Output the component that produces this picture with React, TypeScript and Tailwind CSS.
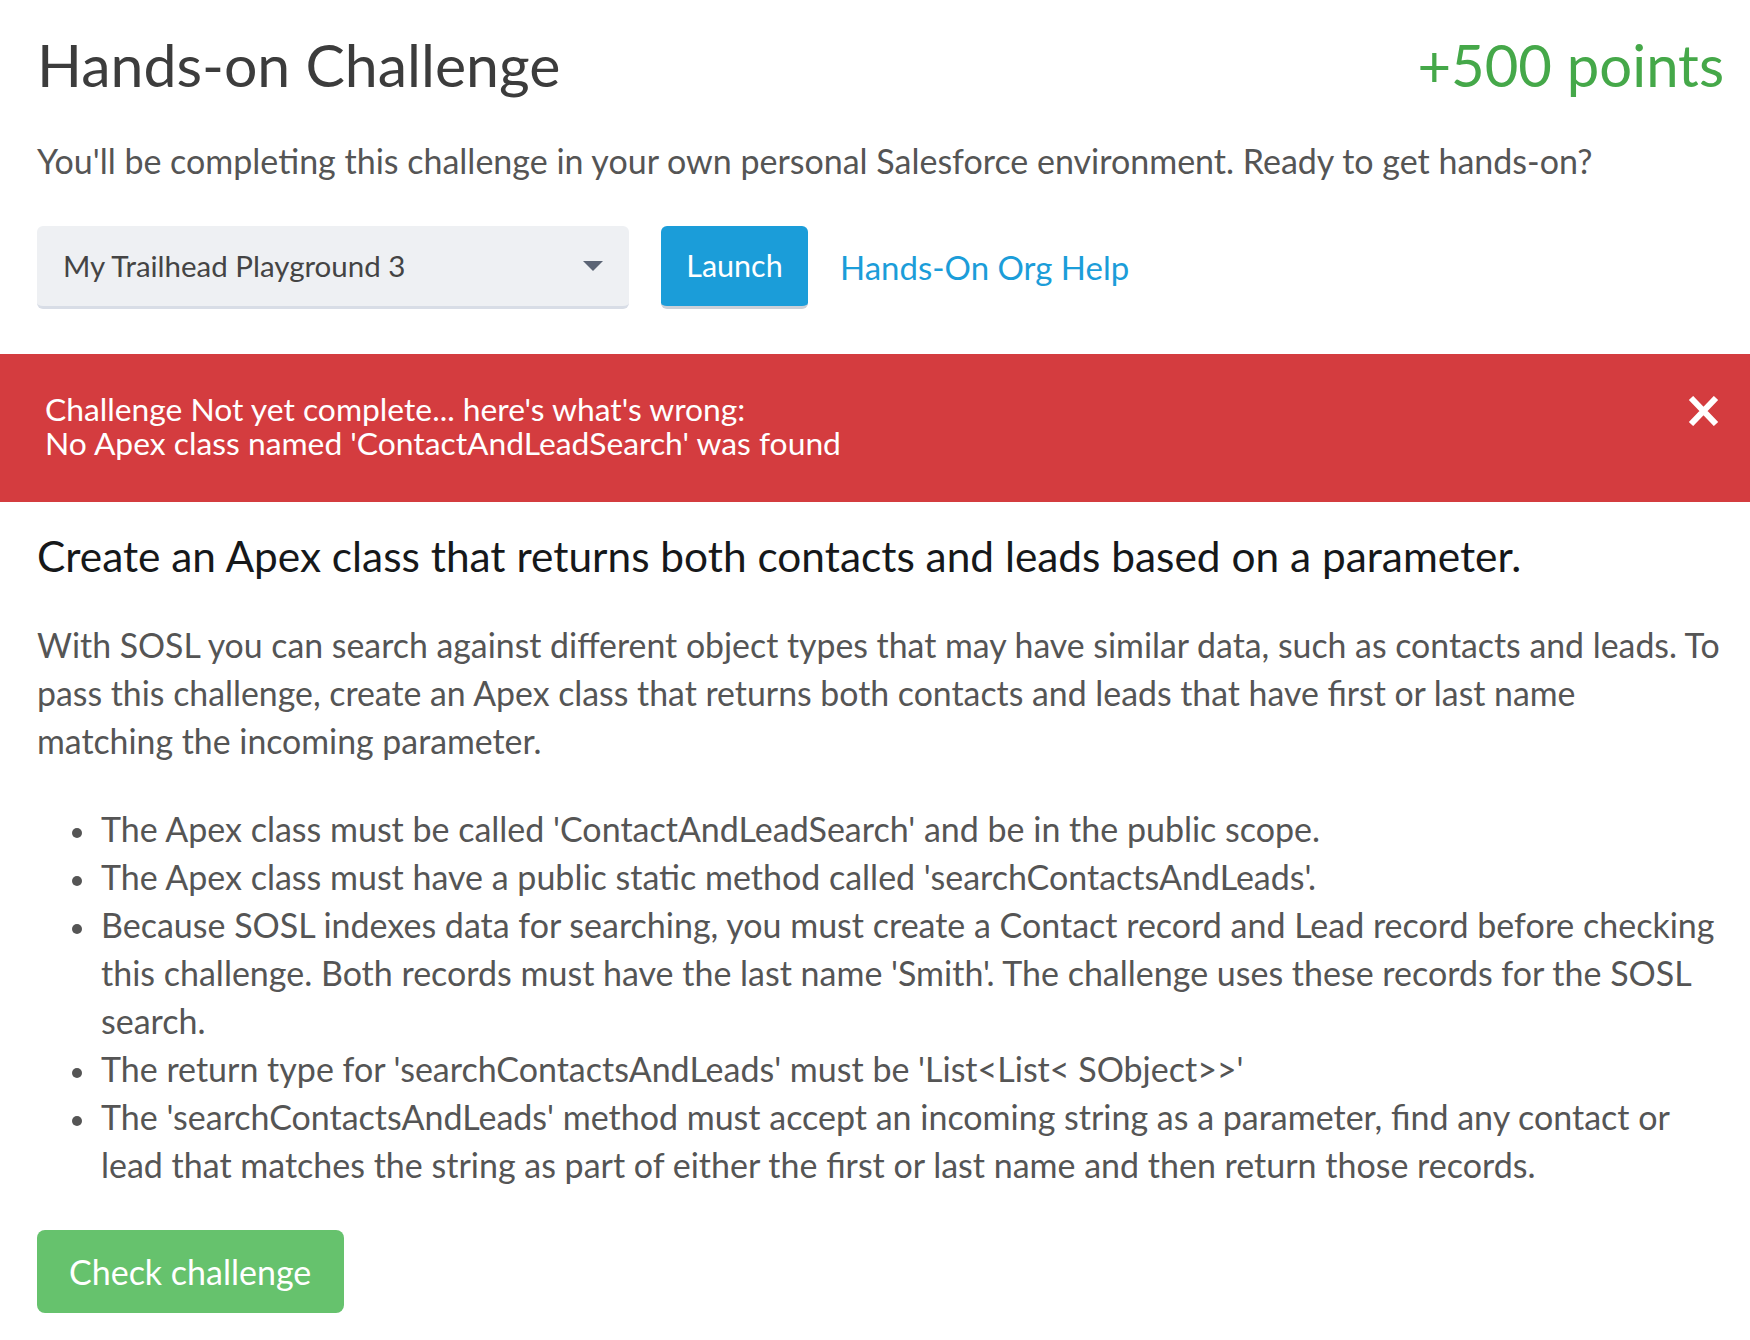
import React from "react";

export default function App() {
  const bullets: React.ReactNode[] = [
    <>The Apex class must be called 'ContactAndLeadSearch' and be in the public scope.</>,
    <>The Apex class must have a public static method called 'searchContactsAndLeads'.</>,
    <>
      Because SOSL indexes data for searching, you must create a Contact record and Lead record before checking
      <br />
      this challenge. Both records must have the last name 'Smith'. The challenge uses these records for the SOSL
      <br />
      search.
    </>,
    <>The return type for 'searchContactsAndLeads' must be 'List&lt;List&lt; SObject&gt;&gt;'</>,
    <>
      The 'searchContactsAndLeads' method must accept an incoming string as a parameter, find any contact or
      <br />
      lead that matches the string as part of either the first or last name and then return those records.
    </>,
  ];
  return (
    <div className="w-[1750px] min-h-[1340px] bg-white font-['Lato','Liberation_Sans',sans-serif] text-[#555555]">
      <div className="pl-[37px] pr-[26px] pt-[33px]">
        <div className="flex items-start justify-between">
          <h1 className="text-[59px] leading-[64px] text-[#3c3c3c] whitespace-nowrap">Hands-on Challenge</h1>
          <div className="text-[58px] leading-[64px] text-[#45a849] whitespace-nowrap">+500 points</div>
        </div>
        <p className="mt-[40px] text-[34px] leading-[48px] whitespace-nowrap">
          You'll be completing this challenge in your own personal Salesforce environment. Ready to get hands-on?
        </p>
        <div className="mt-[41px] flex items-start">
          <div className="w-[592px] h-[83px] rounded-[6px] bg-[#eef0f3] border-b-[3px] border-[#d8dde6] flex items-center justify-between pl-[26px] pr-[26px]">
            <span className="text-[29.5px] text-[#444444]">My Trailhead Playground 3</span>
            <svg width="20" height="10" viewBox="0 0 20 10">
              <polygon points="0,0 20,0 10,10" fill="#5b6475" />
            </svg>
          </div>
          <button className="ml-[32px] w-[147px] h-[83px] rounded-[6px] bg-[#1b9dd9] border-b-[3px] border-[#cbd0d8] text-white text-[30.5px]">
            Launch
          </button>
          <a className="ml-[32px] self-center text-[33px] text-[#1b9dd9]">Hands-On Org Help</a>
        </div>
      </div>

      <div className="mt-[45px] bg-[#d43c3f] flex justify-between items-start pl-[45px] pr-[31px] pt-[38px] pb-[42px] text-white">
        <div className="text-[31.8px] leading-[34px] whitespace-nowrap">
          <div>Challenge Not yet complete... here's what's wrong:</div>
          <div>No Apex class named 'ContactAndLeadSearch' was found</div>
        </div>
        <svg className="mt-[4px]" width="31" height="30" viewBox="0 0 31 30">
          <path d="M3 2 L28 28 M28 2 L3 28" stroke="white" strokeWidth="6" />
        </svg>
      </div>

      <div className="pl-[37px] pr-[4px]">
        <h2 className="mt-[30px] text-[42.4px] leading-[48px] text-[#16181a] whitespace-nowrap">
          Create an Apex class that returns both contacts and leads based on a parameter.
        </h2>
        <p className="mt-[41px] text-[33.85px] leading-[48px] whitespace-nowrap">
          With SOSL you can search against different object types that may have similar data, such as contacts and leads. To
          <br />
          pass this challenge, create an Apex class that returns both contacts and leads that have first or last name
          <br />
          matching the incoming parameter.
        </p>
        <ul className="mt-[40px] text-[34px] leading-[48px]">
          {bullets.map((b, i) => (
            <li key={i} className="flex">
              <span className="w-[64px] shrink-0">
                <span className="block ml-[35px] mt-[23px] w-[10px] h-[10px] rounded-full bg-[#555555]" />
              </span>
              <span className="whitespace-nowrap">{b}</span>
            </li>
          ))}
        </ul>
        <button className="mt-[41px] w-[307px] h-[83px] rounded-[8px] bg-[#66c26d] text-white text-[34px] text-left pl-[32px]">
          Check challenge
        </button>
      </div>
    </div>
  );
}
